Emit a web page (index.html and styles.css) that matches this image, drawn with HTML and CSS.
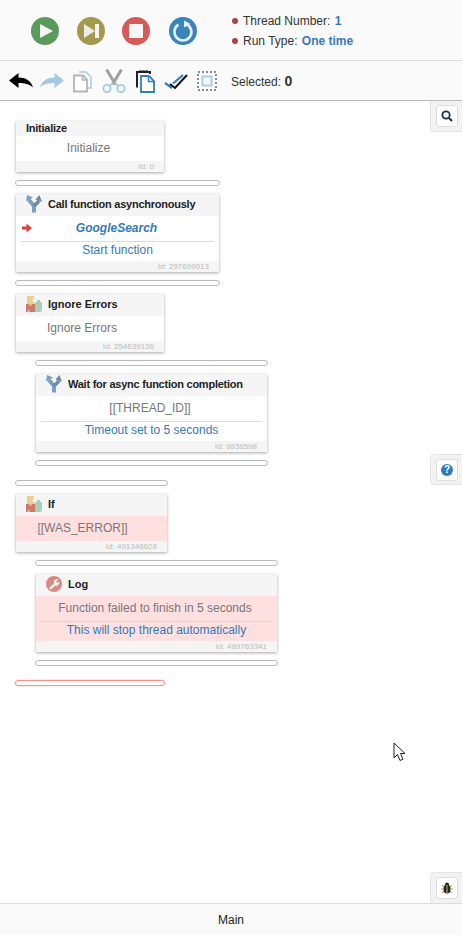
FILE: index.html
```html
<!DOCTYPE html>
<html lang="en">
<head>
    <meta charset="UTF-8">
    <meta name="viewport" content="width=device-width, initial-scale=1.0">
    <title>Thread Editor</title>
    <link rel="stylesheet" href="styles.css">
</head>
<body>
    <div class="run-bar">
        <div class="run-buttons">
            <svg class="run-btn" viewBox="0 0 28 28"><circle cx="14" cy="14" r="14" fill="#5b9a5d"/><path d="M9 7l13 7-13 7z" fill="#f4f4f4"/></svg>
            <svg class="run-btn" viewBox="0 0 28 28"><circle cx="14" cy="14" r="14" fill="#a39a4d"/><path d="M7 7l11 7-11 7z" fill="#ececec"/><rect x="18" y="7" width="4" height="14" fill="#f4f4f4"/></svg>
            <svg class="run-btn stop" viewBox="0 0 28 28"><circle cx="14" cy="14" r="14" fill="#d45b57"/><rect x="7" y="7" width="14" height="14" rx="1" fill="#f6f6f6"/></svg>
            <svg class="run-btn restart" viewBox="0 0 28 28"><circle cx="14" cy="14" r="14" fill="#3b84b9"/><path d="M18.500 7.800A8.500 8.500 0 1 1 9.500 7.700" fill="none" stroke="#e8eef3" stroke-width="2.600"/><path d="M15 3.500l6.500 3.500-6.500 3.500z" fill="#e8eef3"/></svg>
        </div>
        <ul class="run-info">
            <li>Thread Number: <b>1</b></li>
            <li>Run Type: <b>One time</b></li>
        </ul>
    </div>

    <div class="toolbar">
        <svg class="tool" viewBox="0 0 24 24"><path d="M0 11.500L9.500 4v4.500C16.500 8.500 22 11.500 24 18.500 20 15 15.500 14 9.500 14v5z" fill="#000"/></svg>
        <svg class="tool" viewBox="0 0 24 24"><path d="M24 11.500L14.500 4v4.500C7.500 8.500 2 11.500 0 18.500 4 15 8.500 14 14.500 14v5z" fill="#a3c9e3"/></svg>
        <svg class="tool" viewBox="0 0 24 24"><path d="M8 3h7l5 5v11h-3" fill="none" stroke="#a9cde6" stroke-width="1.500"/><path d="M3 6.500h9l4 4v12H3z" fill="#fff" stroke="#b4b4b4" stroke-width="1.800"/><path d="M11.500 6.500v4.500H16" fill="none" stroke="#b4b4b4" stroke-width="1.500"/></svg>
        <svg class="tool" viewBox="0 0 24 24"><path d="M4.500 0.500l9 15M19.500 0.500l-9 15" stroke="#a0a0a0" stroke-width="3" fill="none"/><circle cx="5" cy="19.500" r="3.700" fill="none" stroke="#a3c9e3" stroke-width="1.800"/><circle cx="19" cy="19.500" r="3.700" fill="none" stroke="#a3c9e3" stroke-width="1.800"/><path d="M8 17l3-3.500M16 17l-3-3.500" stroke="#a3c9e3" stroke-width="1.800"/></svg>
        <svg class="tool" viewBox="0 0 24 24"><path d="M5 17.500H4V3h13v2" fill="none" stroke="#222" stroke-width="2"/><rect x="6" y="1.500" width="9" height="2.500" fill="#222"/><path d="M8 7h8l5 5v11H8z" fill="#fff" stroke="#2f80bd" stroke-width="1.800"/><path d="M15.500 7v5.500H21" fill="none" stroke="#2f80bd" stroke-width="1.500"/></svg>
        <svg class="tool" viewBox="0 0 24 24"><path d="M1 14l7 5" stroke="#2f80bd" stroke-width="2.200" fill="none"/><path d="M6 15l5 4L23 6" stroke="#111" stroke-width="2" fill="none"/><path d="M9 14.500L19 6" stroke="#2f80bd" stroke-width="2.200" fill="none"/></svg>
        <svg class="tool" viewBox="0 0 24 24"><rect x="3" y="3" width="18" height="18" fill="none" stroke="#8a8a8a" stroke-width="2" stroke-dasharray="2 2"/><rect x="7.500" y="7.500" width="9" height="9" fill="#f4f8fb" stroke="#a9cde6" stroke-width="2"/></svg>
        <span class="selected">Selected: <b>0</b></span>
    </div>

    <div class="canvas">
        <div class="stack">
            <div class="card w-148">
                <div class="card-title plain tight">Initialize</div>
                <div class="row shift-s">Initialize</div>
                <div class="card-id">Id: 0</div>
            </div>
            <div class="drop w-205"></div>
            <div class="card w-203">
                <div class="card-title tight">
                    <svg class="card-icon" viewBox="0 0 16 18"><path d="M8 17.500V11L3 5" fill="none" stroke="#7b9dc2" stroke-width="4"/><path d="M0 6.500L1 0l6 2.500z" fill="#7b9dc2"/><path d="M8 11l5-5" fill="none" stroke="#6a89a6" stroke-width="3.500"/><path d="M9.500 4.500L13.500 0 16 7z" fill="#6a89a6"/></svg>
                    Call function asynchronously
                </div>
                <div class="row fn"><svg class="fn-arrow" viewBox="0 0 10 10"><path d="M0 3.500h4.500V0.500L10 5 4.500 9.500v-3H0z" fill="#d9403f"/></svg>GoogleSearch</div>
                <div class="row link sep">Start function</div>
                <div class="card-id">Id: 297699013</div>
            </div>
            <div class="drop w-205"></div>
            <div class="card w-148">
                <div class="card-title">
                    <svg class="card-icon" viewBox="0 0 16 16"><path d="M1 0h7v3.500H6.500v2H8V9H1z" fill="#eecf8e"/><path d="M0 8h3.500v1.500h2V8H9v8H0z" fill="#cf7b6c"/><path d="M9 6h2V4h3v2h2v10H9z" fill="#a9cdbb"/><path d="M2 14v1h2M14 15h1v-1" fill="none" stroke="#f5f5f5" stroke-width="0.800"/></svg>
                    Ignore Errors
                </div>
                <div class="row shift-l">Ignore Errors</div>
                <div class="card-id">Id: 254639136</div>
            </div>
            <div class="stack nested">
                <div class="drop w-233"></div>
                <div class="card w-231">
                    <div class="card-title tight">
                        <svg class="card-icon" viewBox="0 0 16 18"><path d="M8 17.500V11L3 5" fill="none" stroke="#7b9dc2" stroke-width="4"/><path d="M0 6.500L1 0l6 2.500z" fill="#7b9dc2"/><path d="M8 11l5-5" fill="none" stroke="#6a89a6" stroke-width="3.500"/><path d="M9.500 4.500L13.500 0 16 7z" fill="#6a89a6"/></svg>
                        Wait for async function completion
                    </div>
                    <div class="row shift-s">[[THREAD_ID]]</div>
                    <div class="row link sep">Timeout set to 5 seconds</div>
                    <div class="card-id">Id: 9838598</div>
                </div>
                <div class="drop w-233"></div>
            </div>
            <div class="drop w-153 after-nest"></div>
            <div class="card w-151">
                <div class="card-title">
                    <svg class="card-icon" viewBox="0 0 16 16"><path d="M1 0h7v3.500H6.500v2H8V9H1z" fill="#eecf8e"/><path d="M0 8h3.500v1.500h2V8H9v8H0z" fill="#cf7b6c"/><path d="M9 6h2V4h3v2h2v10H9z" fill="#a9cdbb"/><path d="M2 14v1h2M14 15h1v-1" fill="none" stroke="#f5f5f5" stroke-width="0.800"/></svg>
                    If
                </div>
                <div class="row error shift-m">[[WAS_ERROR]]</div>
                <div class="card-id">Id: 491346628</div>
            </div>
            <div class="stack nested">
                <div class="drop w-243"></div>
                <div class="card w-241">
                    <div class="card-title">
                        <svg class="card-icon" viewBox="0 0 16 16"><circle cx="8" cy="8" r="8" fill="#d58a82"/><path d="M2.800 12l5-4.300a3.600 3.600 0 0 1 4.700-4.500L10.300 5.500l0.700 1.500 2.200-1.500A3.600 3.600 0 0 1 9 10l-4.300 3.800z" fill="#f6ecea"/></svg>
                        Log
                    </div>
                    <div class="row error shift-s">Function failed to finish in 5 seconds</div>
                    <div class="row error link sep">This will stop thread automatically</div>
                    <div class="card-id">Id: 489763341</div>
                </div>
                <div class="drop w-243"></div>
            </div>
            <div class="drop drop-end w-150 after-nest"></div>
        </div>

        <div class="side-tab tab-search">
            <span class="side-btn"><svg viewBox="0 0 12 12"><circle cx="5" cy="5" r="3.700" fill="none" stroke="#23343f" stroke-width="1.800"/><path d="M8 8l3 3" stroke="#23343f" stroke-width="2.200"/></svg></span>
        </div>
        <div class="side-tab tab-help">
            <span class="side-btn"><span class="help-dot">?</span></span>
        </div>
        <div class="side-tab tab-bug">
            <span class="side-btn"><svg viewBox="0 0 12 12"><path d="M1 3l2 2M11 3L9 5M0 7h2.500M12 7H9.500M1 11l2-2M11 11L9 9" stroke="#c98f4a" stroke-width="1"/><ellipse cx="6" cy="7" rx="3.500" ry="4.500" fill="#27251f"/><circle cx="6" cy="2.500" r="2" fill="#27251f"/><path d="M6 3v8" stroke="#d9b77e" stroke-width="1"/></svg></span>
        </div>

        <svg class="cursor" viewBox="0 0 13 20"><path d="M1 1v15l3.500-3.500L7 18.500l3-1.300-2.500-5.700H12z" fill="#fff" stroke="#222" stroke-width="1"/></svg>
    </div>

    <div class="tabs">Main</div>
</body>
</html>
```

FILE: styles.css
```css
* { box-sizing: border-box; }
body { margin: 0; height: 935px; display: flex; flex-direction: column; overflow: hidden; font-family: "Liberation Sans", Arial, sans-serif; font-size: 12px; color: #333; background: white; }

.run-bar { height: 61px; display: flex; align-items: center; background: #fafafa; border-bottom: 1px solid #ddd; padding: 0 0 0 31px; }
.run-buttons { display: flex; gap: 18px; margin-top: 2px; }
.run-btn { width: 28px; height: 28px; display: block; }
.run-btn.stop { margin-left: -1px; }
.run-btn.restart { margin-left: 1px; }
.run-info { list-style: none; margin: 2px 0 0 34px; padding: 0; }
.run-info li { height: 20px; line-height: 20px; padding-left: 12px; position: relative; }
.run-info li::before { content: ""; position: absolute; left: 1px; top: 7px; width: 6px; height: 6px; border-radius: 50%; background: #a94442; }
.run-info b { color: #337ab7; margin-left: 1px; }

.toolbar { height: 40px; display: flex; align-items: center; gap: 7px; background: #fafafa; border-bottom: 1px solid #bbb; padding-left: 9px; }
.tool { width: 24px; height: 24px; display: block; flex: none; }
.selected { margin-left: 5px; }
.selected b { font-size: 14px; }

.canvas { flex: 1; position: relative; padding: 20px 0 0 15px; background: white; }
.stack { display: flex; flex-direction: column; align-items: flex-start; gap: 8px; }
.nested { margin-left: 20px; }
.after-nest { margin-top: 6px; }

.drop { height: 6px; border: 1px solid #bbb; border-radius: 3px; background: white; }
.drop-end { border-color: #f58f8f; box-shadow: 0 0 2px #fbb; }

.card { margin: 0 1px; background: white; box-shadow: 0 1px 3px rgba(0,0,0,0.35); }
.w-148 { width: 148px; }
.w-150 { width: 150px; }
.w-151 { width: 151px; }
.w-153 { width: 153px; }
.w-203 { width: 203px; }
.w-205 { width: 205px; }
.w-231 { width: 231px; }
.w-233 { width: 233px; }
.w-241 { width: 241px; }
.w-243 { width: 243px; }

.card-title { height: 22px; display: flex; align-items: center; gap: 6px; padding: 0 0 2px 10px; background: #f5f5f5; font-size: 11px; font-weight: bold; color: #222; }
.card-title.plain { height: 15px; }
.card-title.tight { letter-spacing: -0.24px; }
.card-icon { width: 16px; height: 18px; flex: none; }

.row { position: relative; height: 25px; line-height: 24px; text-align: center; color: #777; }
.row.link { color: #337ab7; }
.row.sep { height: 20px; line-height: 18px; margin: 0; }
.row.sep::before { content: ""; position: absolute; left: 5px; right: 5px; top: 0; height: 1px; background: #ddd; }
.row.error { background: #ffe0e0; }
.row.error.sep::before { background: #eccfcf; }
.row.fn { color: #337ab7; font-style: italic; font-weight: bold; padding-right: 2px; }
.fn-arrow { position: absolute; left: 6px; top: 7px; width: 10px; height: 10px; }
.shift-s { padding-right: 3px; }
.shift-m { padding-right: 18px; }
.shift-l { padding-right: 16px; }

.card-id { height: 11px; line-height: 11px; padding-right: 10px; text-align: right; background: #f5f5f5; font-size: 8px; color: #bbb; }

.side-tab { position: absolute; right: 0; width: 32px; height: 31px; padding: 4px 0 0 5px; background: #f2f2f2; border: 1px solid #e4e4e4; border-right: none; border-radius: 4px 0 0 4px; }
.tab-search { top: 0; border-top: none; border-radius: 0 0 0 4px; }
.tab-help { top: 353px; }
.tab-bug { top: 771px; border-bottom: none; border-radius: 4px 0 0 0; }
.side-btn { width: 22px; height: 22px; display: flex; align-items: center; justify-content: center; background: white; border: 1px solid #ddd; border-radius: 3px; }
.side-btn svg { width: 12px; height: 12px; display: block; }
.help-dot { width: 12px; height: 12px; border-radius: 50%; background: #337ab7; color: white; font-size: 10px; font-weight: bold; line-height: 12px; text-align: center; }

.cursor { position: absolute; left: 393px; top: 641px; width: 13px; height: 20px; }

.tabs { height: 32px; line-height: 32px; text-align: center; background: #fafafa; border-top: 1px solid #ddd; color: #222; }
```
